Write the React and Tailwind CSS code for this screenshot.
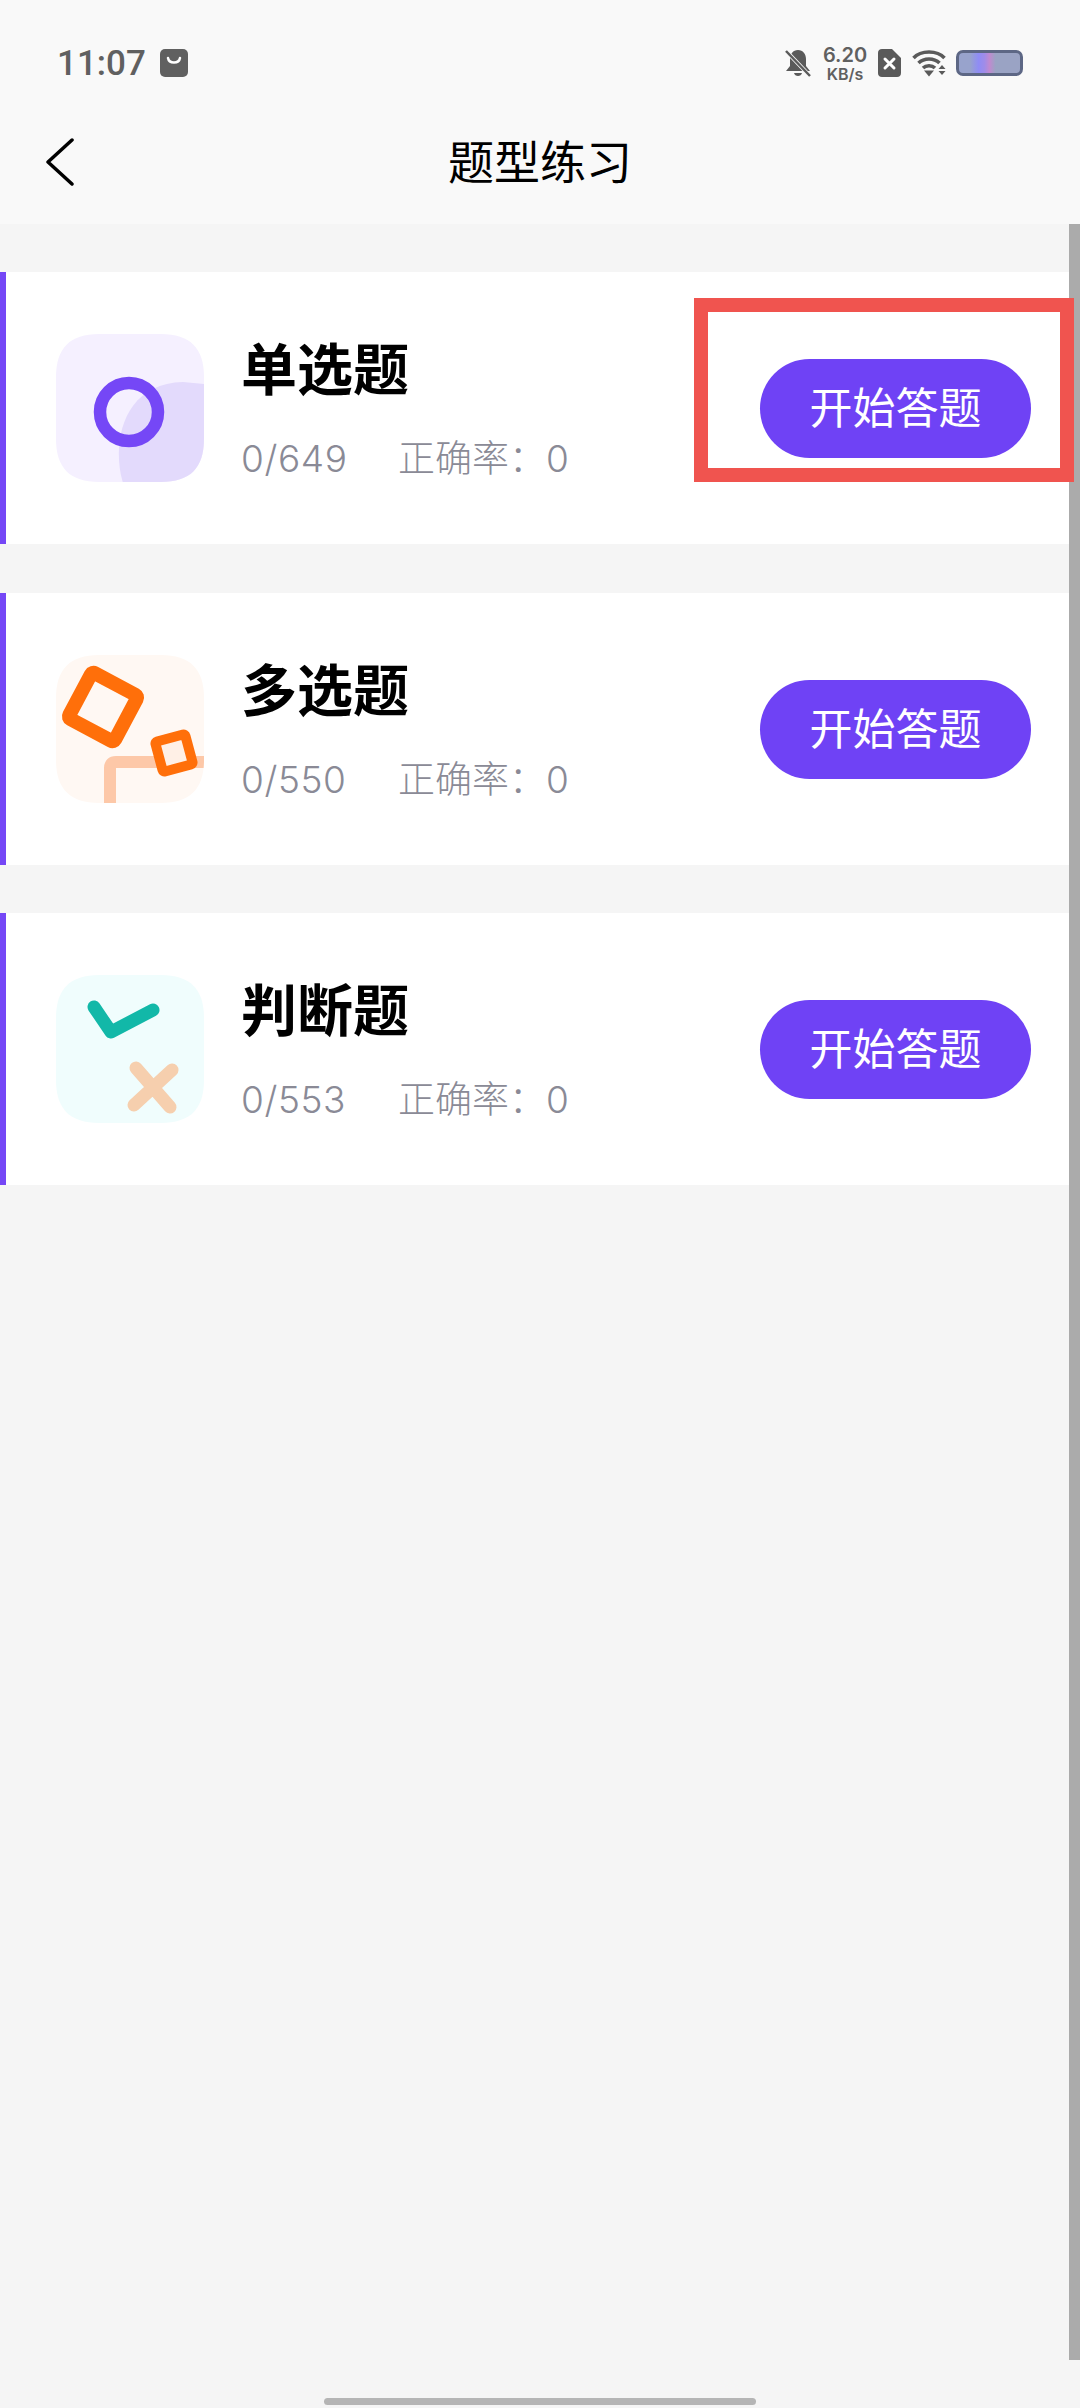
import React from "react";

const cjk = "font-['Inter','Noto_Sans_CJK_SC',sans-serif]";

const squirclePath = "M44 1H106C135 1 149 15 149 44V106C149 135 135 149 106 149H44C15 149 1 135 1 106V44C1 15 15 1 44 1Z";

const SingleIcon = () => (
  <svg width="150" height="150" viewBox="0 0 150 150" className="shrink-0">
    <defs>
      <clipPath id="squircle">
        <path d={squirclePath} />
      </clipPath>
    </defs>
    <g clipPath="url(#squircle)">
      <rect width="150" height="150" fill="#f5f0ff" />
      <path d="M68 150C56 110 68 50 128 49L150 51V150Z" fill="#e3dafc" />
    </g>
    <circle cx="74" cy="79" r="29" fill="none" stroke="#7547f6" strokeWidth="12.500" />
  </svg>
);

const MultiIcon = () => (
  <svg width="150" height="150" viewBox="0 0 150 150" className="shrink-0">
    <defs>
      <clipPath id="squircle2">
        <path d={squirclePath} />
      </clipPath>
    </defs>
    <g clipPath="url(#squircle2)">
      <rect width="150" height="150" fill="#fff8f3" />
      <path d="M55 150V114Q55 108 61 108H150" fill="none" stroke="#fdc8a8" strokeWidth="12" />
    </g>
    <rect x="22" y="27" width="52" height="52" rx="3" transform="rotate(28 48 53)" fill="#fff8f3" stroke="#ff6f0a" strokeWidth="14" strokeLinejoin="round" />
    <rect x="103.500" y="83.500" width="31" height="31" rx="2" transform="rotate(-15 119 99)" fill="#fff0e6" stroke="#ff6f0a" strokeWidth="10" strokeLinejoin="round" />
  </svg>
);

const JudgeIcon = () => (
  <svg width="150" height="150" viewBox="0 0 150 150" className="shrink-0">
    <path d={squirclePath} fill="#f0fdfd" />
    <path d="M39 33L56 58L98 36" fill="none" stroke="#12b8a8" strokeWidth="13" strokeLinecap="round" strokeLinejoin="round" />
    <path d="M81 94L115 133M117 96L79 131" fill="none" stroke="#f6cfae" strokeWidth="13" strokeLinecap="round" />
  </svg>
);

const items = [
  { title: "单选题", count: "0/649", Icon: SingleIcon, gap: "mt-[48px]" },
  { title: "多选题", count: "0/550", Icon: MultiIcon, gap: "mt-[49px]" },
  { title: "判断题", count: "0/553", Icon: JudgeIcon, gap: "mt-[48px]" },
];

const StatusIcons = () => (
  <div className="flex items-center text-[#606060]">
    <svg width="26" height="28" viewBox="0 0 26 28" className="mr-[12px]">
      <path d="M13 1C18 1 21 5 21 10V17L25 22H1L5 17V10C5 5 8 1 13 1Z" fill="#5a5a5a" />
      <path d="M9 24H17C16.500 26 15 27 13 27S9.500 26 9 24Z" fill="#5a5a5a" />
      <path d="M1 2L25 27" stroke="#f9f9f9" strokeWidth="4" />
      <path d="M1 2L25 27" stroke="#5a5a5a" strokeWidth="2.500" />
    </svg>
    <div className="flex flex-col items-center w-[44px] mr-[11px] font-['Inter',sans-serif] font-semibold">
      <span className="text-[20px] leading-[21px]">6.20</span>
      <span className="text-[16px] leading-[16px]">KB/s</span>
    </div>
    <svg width="23" height="28" viewBox="0 0 23 28" className="mr-[11px]">
      <path d="M4 0H14L23 9V24C23 26.500 21.500 28 19 28H4C1.500 28 0 26.500 0 24V4C0 1.500 1.500 0 4 0Z" fill="#5a5a5a" />
      <path d="M7 10L16 19M16 10L7 19" stroke="#fff" strokeWidth="3" strokeLinecap="round" />
    </svg>
    <svg width="34" height="28" viewBox="0 0 34 28" className="mr-[10px]">
      <path d="M1.500 9C9 1 25 1 32.500 9" fill="none" stroke="#5a5a5a" strokeWidth="3.500" />
      <path d="M6.500 14C12 8.500 22 8.500 27.500 14" fill="none" stroke="#5a5a5a" strokeWidth="3.500" />
      <path d="M11 19C14 16 20 16 23 19" fill="none" stroke="#5a5a5a" strokeWidth="3.500" />
      <path d="M12 21.500H22L17 27.500Z" fill="#5a5a5a" />
      <path d="M30 16L33.500 20H26.500ZM26.500 22H33.500L30 26Z" fill="#5a5a5a" />
    </svg>
    <div className="w-[67px] h-[26px] rounded-[7px] border-[3px] border-[#5d6785] bg-[linear-gradient(90deg,#98a3cc_0%,#98a3cc_18%,#8f8cf5_32%,#a08ce8_42%,#c08ad0_50%,#9aa3c4_60%,#9aa3c4_100%)]" />
  </div>
);

export default function App() {
  return (
    <div className={`relative min-h-[2408px] bg-[#f5f5f5] overflow-hidden ${cjk}`}>
      <div className="bg-[#f9f9f9]">
        <div className="h-[110px] pl-[57px] pr-[57px] pt-[16px] flex items-center justify-between">
          <div className="flex items-center gap-[14px]">
            <span className="text-[35px] leading-none font-medium text-[#606060] font-['Roboto',sans-serif]">11:07</span>
            <svg width="28" height="28" viewBox="0 0 28 28">
              <rect width="28" height="28" rx="5" fill="#606060" />
              <path d="M8 9C9 15 19 15 20 9" fill="none" stroke="#fff" strokeWidth="2.500" strokeLinecap="round" />
            </svg>
          </div>
          <StatusIcons />
        </div>
        <div className="h-[114px] grid grid-cols-[1fr_auto_1fr] items-center pb-[10px]">
          <div className="pl-[46px]">
            <svg width="28" height="48" viewBox="0 0 28 48">
              <path d="M26 2L2 24L26 46" fill="none" stroke="#000" strokeWidth="3.500" strokeLinecap="round" strokeLinejoin="round" />
            </svg>
          </div>
          <h1 className="text-[46px] leading-none font-normal text-black">题型练习</h1>
          <div />
        </div>
      </div>

      <div className="flex flex-col">
        {items.map(({ title, count, Icon, gap }) => (
          <div key={title} className={`${gap} h-[272px] bg-white border-l-[6px] border-[#7547f6] pl-[49px] pr-[49px] flex items-center`}>
            <Icon />
            <div className="ml-[36px] flex-1 self-start pt-[68px]">
              <div className="text-[56px] leading-[60px] font-bold text-black">{title}</div>
              <div className="mt-[37px] flex text-[37px] leading-[44px] font-light text-[#8a8a96]">
                <span className="w-[157px] tracking-[0.6px]">{count}</span>
                <span>正确率：0</span>
              </div>
            </div>
            <button className="w-[271px] h-[99px] rounded-full bg-[#6f42f5] text-white text-[43px] leading-none">开始答题</button>
          </div>
        ))}
      </div>

      {/* scrollbar */}
      <div className="absolute right-0 top-[224px] w-[11px] h-[2136px] bg-[#ababab]" />
      {/* red highlight */}
      <div className="absolute left-[694px] top-[298px] w-[380px] h-[184px] border-[14px] border-[#f0544f]" />
      {/* home indicator */}
      <div className="absolute left-[324px] top-[2398px] w-[432px] h-[7px] rounded-full bg-[#b5b5b5]" />
    </div>
  );
}
